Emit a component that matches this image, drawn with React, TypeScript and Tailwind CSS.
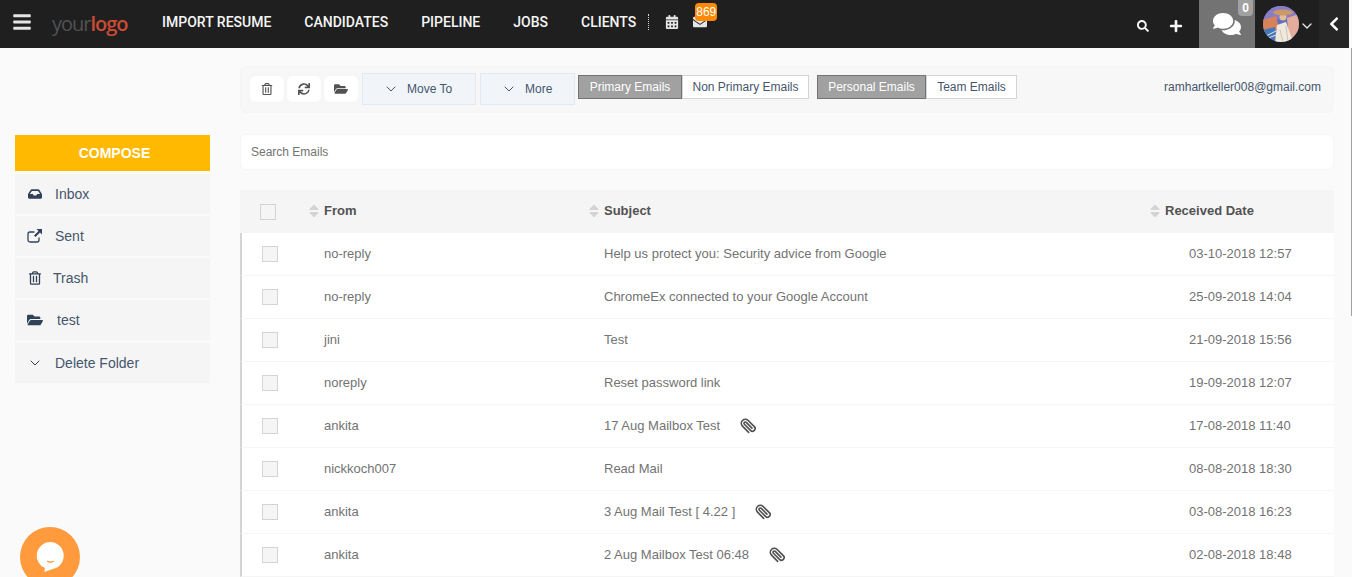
import type { ReactNode } from 'react';
import {
  FaBars,
  FaCalendarAlt,
  FaEnvelope,
  FaSearch,
  FaPlus,
  FaComments,
  FaChevronLeft,
  FaRegTrashAlt,
  FaSync,
  FaFolderOpen,
  FaInbox,
  FaSort,
} from 'react-icons/fa';
import { FiChevronDown, FiPaperclip } from 'react-icons/fi';

const NAV = ['IMPORT RESUME', 'CANDIDATES', 'PIPELINE', 'JOBS', 'CLIENTS'];

const MAILS = [
  { from: 'no-reply', subject: 'Help us protect you: Security advice from Google', date: '03-10-2018 12:57' },
  { from: 'no-reply', subject: 'ChromeEx connected to your Google Account', date: '25-09-2018 14:04' },
  { from: 'jini', subject: 'Test', date: '21-09-2018 15:56' },
  { from: 'noreply', subject: 'Reset password link', date: '19-09-2018 12:07' },
  { from: 'ankita', subject: '17 Aug Mailbox Test', date: '17-08-2018 11:40', clip: true },
  { from: 'nickkoch007', subject: 'Read Mail', date: '08-08-2018 18:30' },
  { from: 'ankita', subject: '3 Aug Mail Test [ 4.22 ]', date: '03-08-2018 16:23', clip: true },
  { from: 'ankita', subject: '2 Aug Mailbox Test 06:48', date: '02-08-2018 18:48', clip: true },
];

// fa4 external-link, the one in the package is too heavy
function SentIcon() {
  return (
    <svg viewBox="0 0 16 16" className="h-4 w-4">
      <path
        d="M12 9.500V12a2 2 0 0 1-2 2H3a2 2 0 0 1-2-2V6a2 2 0 0 1 2-2h4.500"
        fill="none"
        stroke="currentColor"
        strokeWidth="1.300"
      />
      <path d="M9.500 1H15v5.500l-2-2-4.500 4.500L7 7.500 11.500 3z" fill="currentColor" />
    </svg>
  );
}

const FOLDERS = [
  { label: 'Inbox', icon: <FaInbox className="h-3.5 w-3.5" />, gap: 'gap-3' },
  { label: 'Sent', icon: <SentIcon />, gap: 'gap-3' },
  { label: 'Trash', icon: <FaRegTrashAlt className="h-3.5 w-3" />, gap: 'gap-2.5' },
  { label: 'test', icon: <FaFolderOpen className="h-4 w-4" />, gap: 'gap-3.5' },
  { label: 'Delete Folder', icon: <FiChevronDown strokeWidth={1.5} className="h-4 w-4" />, gap: 'gap-3' },
];

function IconButton({ children }: { children: ReactNode }) {
  return (
    <button className="flex h-7 w-9 items-center justify-center rounded-md border border-neutral-100 bg-white text-neutral-600">
      {children}
    </button>
  );
}

function Toggle({ label, active, className }: { label: string; active?: boolean; className: string }) {
  return (
    <button
      className={
        active
          ? `mb-1 h-6 border border-neutral-500 bg-neutral-400 text-white ${className}`
          : `mb-1 h-6 border border-neutral-300 bg-white text-slate-600 ${className}`
      }
    >
      {label}
    </button>
  );
}

function Dropdown({ label, className }: { label: string; className: string }) {
  return (
    <button className={`flex h-8 items-center gap-2 border border-slate-200 bg-slate-100 text-slate-600 ${className}`}>
      <FiChevronDown strokeWidth={1.5} className="h-4 w-4" />
      {label}
    </button>
  );
}

function SortHead({ label }: { label: string }) {
  return (
    <div className="-ml-4 mb-0.5 flex items-center gap-1 font-bold text-neutral-600">
      <FaSort className="h-4 w-3 text-neutral-300" />
      {label}
    </div>
  );
}

function Avatar() {
  return (
    <svg viewBox="0 0 36 36" className="h-9 w-9">
      <defs>
        <clipPath id="av">
          <circle cx="18" cy="18" r="18" />
        </clipPath>
      </defs>
      <g clipPath="url(#av)">
        <rect width="36" height="36" fill="#6272bd" />
        <path d="M0 0h36v10L0 16z" fill="#8a7cc4" />
        <path d="M0 14l13-4 3 12-16 6z" fill="#d9825a" />
        <path d="M24 12l12-4v16l-10 12z" fill="#e3ac9c" />
        <path d="M0 24l12-3-1 15H0z" fill="#3f78bd" />
        <path d="M3 30l10-5M3 33l10-4" stroke="#f3e3c8" strokeWidth="1" />
        <path d="M12 36l2-17 9-3 7 20z" fill="#efe9dd" />
        <path d="M17 24l3 12M23 20l2 16" stroke="#c9b8a6" strokeWidth="0.800" />
        <circle cx="20" cy="11" r="3.500" fill="#e6bb9a" />
        <ellipse cx="20" cy="6.500" rx="10" ry="3" fill="#c99a68" />
      </g>
    </svg>
  );
}

export default function App() {
  return (
    <div className="flex h-screen flex-col overflow-hidden bg-neutral-50 font-['Liberation_Sans',sans-serif] text-[13px]">
      <header className="mr-[3px] flex h-12 shrink-0 items-stretch bg-[#1f1f1f] text-white">
        <div className="flex items-center pb-1">
          <FaBars className="ml-3 h-5 w-5 text-neutral-200" />
          <span className="ml-5 mt-1 w-[110px] font-['Open_Sans',sans-serif] text-xl font-medium tracking-tighter text-neutral-600">
            your<span className="font-semibold text-[#cb4b35]">logo</span>
          </span>
          <nav className="flex items-center gap-[33px] font-['Roboto',sans-serif] text-sm font-medium text-neutral-100">
            {NAV.map((item) => (
              <a key={item}>{item}</a>
            ))}
          </nav>
          <div className="ml-3 h-4 border-l border-dotted border-neutral-300" />
          <FaCalendarAlt className="ml-4 h-3.5 w-3.5 text-neutral-200" />
          <div className="relative ml-3.5">
            <FaEnvelope className="h-3.5 w-3.5 text-neutral-200" />
            <span className="absolute -top-3 left-0.5 rounded bg-orange-400 px-px text-xs leading-4.5 text-white">
              869
            </span>
          </div>
        </div>
        <div className="ml-auto flex items-center">
          <FaSearch className="mt-1 h-3 w-3 text-neutral-100" />
          <FaPlus className="ml-5 mt-1 h-3.5 w-3.5 text-neutral-100" />
          <div className="relative ml-4 flex h-full w-14 items-center justify-center bg-neutral-500">
            <FaComments className="h-7 w-7 text-white" />
            <span className="absolute right-0.5 top-0 rounded-b bg-neutral-400 px-1 text-xs font-bold leading-4">0</span>
          </div>
          <div className="ml-2">
            <Avatar />
          </div>
          <FiChevronDown className="mt-1 h-4 w-4 text-neutral-200" />
          <div className="ml-1 flex h-full w-7.5 items-center justify-center bg-neutral-800">
            <FaChevronLeft className="h-4 w-4 text-white" />
          </div>
        </div>
      </header>

      <div className="flex min-h-0 flex-1">
        <aside className="relative w-[240px] shrink-0 pl-[15px] pr-[30px] pt-[87px]">
          <button className="h-9 w-full bg-amber-400 pl-1 text-sm font-bold text-white">COMPOSE</button>
          <ul className="mt-[3px] flex flex-col gap-0.5">
            {FOLDERS.map((f) => (
              <li
                key={f.label}
                className={`flex h-10 items-center bg-neutral-100 pl-3 text-sm text-slate-600 last:mt-px ${f.gap}`}
              >
                <span className="flex w-4 justify-center text-slate-700">{f.icon}</span>
                {f.label}
              </li>
            ))}
          </ul>
          <div className="absolute -bottom-2.5 left-5 flex h-15 w-15 items-center justify-center rounded-full bg-[#ff9a3d]">
            <svg viewBox="0 0 32 34" className="h-8 w-8">
              <path d="M16 1a14.500 14.500 0 0 1 3 28.700L10 33l.6-4.200A14.500 14.500 0 0 1 16 1z" fill="#fff" />
              <path d="M13 21.500q3.500 2 7 0" stroke="#ff9a3d" strokeWidth="1.500" fill="none" />
            </svg>
          </div>
        </aside>

        <main className="min-w-0 flex-1 pr-[15px] pt-[18px]">
          <section className="flex h-[47px] items-center rounded-md border border-neutral-100 bg-neutral-100/60 pb-0.5 pl-2 pr-3 text-xs">
            <div className="flex gap-px">
              <IconButton>
                <FaRegTrashAlt className="h-3 w-3" />
              </IconButton>
              <IconButton>
                <FaSync className="h-3 w-3" />
              </IconButton>
              <IconButton>
                <FaFolderOpen className="h-3.5 w-3.5" />
              </IconButton>
            </div>
            <Dropdown label="Move To" className="ml-[3px] w-[114px] pl-5" />
            <Dropdown label="More" className="ml-1 w-[95px] pl-5" />
            <Toggle label="Primary Emails" active className="ml-[3px] w-[104px]" />
            <Toggle label="Non Primary Emails" className="w-[127px]" />
            <Toggle label="Personal Emails" active className="ml-2 w-[109px]" />
            <Toggle label="Team Emails" className="w-[91px]" />
            <span className="mb-1 ml-auto text-slate-600">ramhartkeller008@gmail.com</span>
          </section>

          <div className="mt-[21px] flex h-9 items-center rounded-md border border-neutral-100 bg-white px-2.5 text-xs text-neutral-500">
            Search Emails
          </div>

          <div className="mt-5 text-neutral-500">
            <div className="grid h-[43px] grid-cols-[84px_280px_1fr_145px] items-center bg-neutral-100">
              <span className="ml-5 h-4 w-4 border border-neutral-300 bg-neutral-100" />
              <SortHead label="From" />
              <SortHead label="Subject" />
              <div className="-ml-6">
                <SortHead label="Received Date" />
              </div>
            </div>
            {MAILS.map((m, i) => (
              <div
                key={i}
                className="grid h-[43px] grid-cols-[84px_280px_1fr_145px] items-center border-b border-l-2 border-b-neutral-100 border-l-neutral-300 bg-white"
              >
                <span className="ml-5 h-4 w-4 border border-neutral-300 bg-neutral-100" />
                <span className="-ml-0.5">{m.from}</span>
                <span className="-ml-0.5 flex items-center gap-5">
                  {m.subject}
                  {m.clip && <FiPaperclip strokeWidth={2.5} className="h-4 w-4 rotate-90 text-neutral-600" />}
                </span>
                <span>{m.date}</span>
              </div>
            ))}
          </div>
        </main>

        <div className="w-[3px] shrink-0">
          <div className="ml-auto h-[268px] w-px bg-neutral-400" />
        </div>
      </div>
    </div>
  );
}
